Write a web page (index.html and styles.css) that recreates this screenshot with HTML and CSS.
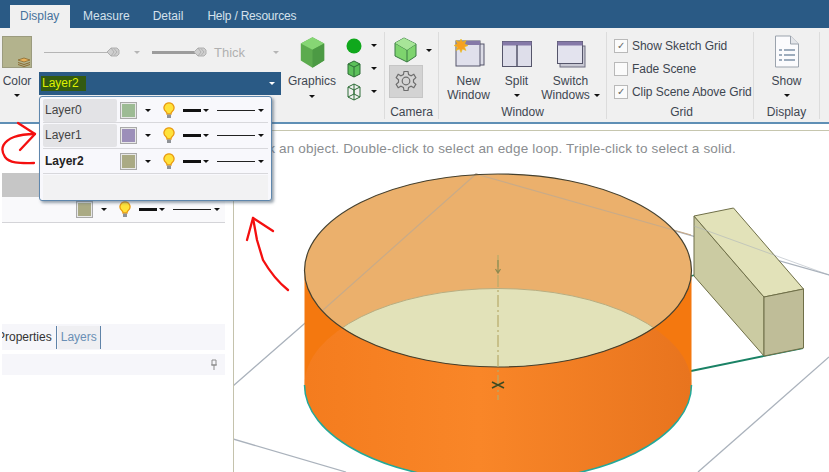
FILE: index.html
```html
<!DOCTYPE html>
<html lang="en">
<head>
<meta charset="utf-8">
<title>Display ribbon</title>
<link rel="stylesheet" href="styles.css">
</head>
<body>
<svg class="defs" width="0" height="0" aria-hidden="true">
  <defs>
    <symbol id="bulb" viewBox="0 0 12 17">
      <path d="M6 .8a5 5 0 0 0-3 9c.8.7 1 1.300 1 2.200h4c0-.9.2-1.500 1-2.200a5 5 0 0 0-3-9z" fill="#ffe23a" stroke="#e99a12" stroke-width="1.300"/>
      <rect x="4" y="12.500" width="4" height="3.500" fill="#8f9296"/>
    </symbol>
    <symbol id="nib" viewBox="0 0 14 10">
      <path d="M1 5l4-4h6l2 2v4l-2 2H5z" fill="#cfcfcf" stroke="#b0b0b0"/>
      <path d="M5 1l3 4-3 4M8 1.500l3 3.500-3 3.500" fill="none" stroke="#a8a8a8" stroke-width=".8"/>
    </symbol>
  </defs>
</svg>
<div class="tabbar">
  <div class="tab active">Display</div>
  <div class="tab">Measure</div>
  <div class="tab">Detail</div>
  <div class="tab">Help / Resources</div>
</div>
<div class="ribbon">
  <section class="group g-layer">
    <div class="color-btn">
      <div class="color-swatch">
        <svg width="14" height="10" viewBox="0 0 14 10"><path d="M1 3l6-2 6 2-6 2z" fill="#e9b15a" stroke="#8a6a30" stroke-width=".8"/><path d="M1 5.500l6 2 6-2M1 7.500l6 2 6-2" fill="none" stroke="#8a6a30"/></svg>
      </div>
      <div class="btn-text">Color</div>
      <i class="caret"></i>
    </div>
    <div class="layer-col">
      <div class="line-row">
        <div class="pencil thin"><svg width="14" height="10"><use href="#nib"/></svg></div>
        <i class="caret pale"></i>
        <div class="pencil thick"><svg width="14" height="10"><use href="#nib"/></svg></div>
        <span class="thick-text">Thick</span>
        <i class="caret pale"></i>
      </div>
      <div class="combo"><span class="combo-text">Layer2</span><i class="caret white"></i></div>
    </div>
  </section>

  <section class="group g-graphics">
    <div class="group-body">
      <div class="big-btn">
        <svg width="27" height="33" viewBox="0 0 30 36"><path d="M15 1l13 7v19l-13 8-13-8V8z" fill="#5cab4e"/><path d="M15 1l13 7-13 7-13-7z" fill="#86d674"/><path d="M15 15l13-7v19l-13 8z" fill="#4c9a44"/></svg>
        <div class="btn-text">Graphics</div>
        <i class="caret"></i>
      </div>
      <div class="mini-col">
        <div class="mini"><svg width="16" height="16" viewBox="0 0 16 16"><circle cx="8" cy="8" r="7.500" fill="#10a81c"/></svg><i class="caret"></i></div>
        <div class="mini"><svg width="16" height="18" viewBox="0 0 16 18"><path d="M8 1l6 3v10l-6 3-6-3V4z" fill="#5cc05a" stroke="#2d6d36"/><path d="M2 4l6 3 6-3M8 7v10" fill="none" stroke="#2d6d36"/></svg><i class="caret"></i></div>
        <div class="mini"><svg width="16" height="18" viewBox="0 0 16 18"><path d="M8 1l6 3v10l-6 3-6-3V4zM2 4l6 3 6-3M8 7v10M8 1v10M2 14l6-3 6 3" fill="none" stroke="#2d6d36"/></svg><i class="caret"></i></div>
      </div>
    </div>
  </section>

  <section class="group g-camera">
    <div class="camera-body">
      <div class="mini"><svg width="24" height="26" viewBox="0 0 24 26"><path d="M10 1l12 6v12l-9 6-12-6V6z" fill="#7ed46e" stroke="#3a7a44"/><path d="M1 6l12 7v12M13 13l9-6" fill="none" stroke="#3a7a44"/><path d="M1 6l9-5 12 6-9 6z" fill="#a7e598"/></svg><i class="caret"></i></div>
      <div class="gear-btn">
        <svg width="22" height="24" viewBox="0 0 22 24"><path d="M9 1.500h4l.6 3 2.500 1.200 2.700-1.500 2 3.500-2.300 2v2.600l2.300 2-2 3.500-2.700-1.500-2.500 1.200-.6 3H9l-.6-3-2.500-1.200-2.700 1.500-2-3.500 2.300-2V9.700l-2.300-2 2-3.500 2.700 1.500 2.500-1.200z" fill="none" stroke="#6d6d6d" stroke-width="1.200"/><circle cx="11" cy="11" r="3.800" fill="none" stroke="#6d6d6d" stroke-width="1.200"/></svg>
      </div>
    </div>
    <div class="group-label">Camera</div>
  </section>

  <section class="group g-window">
    <div class="group-body">
      <div class="win-btn w-new">
        <svg class="win-icon" width="32" height="30" viewBox="0 0 32 30"><rect x="11" y="5" width="20" height="21" fill="#dcdce6" stroke="#55556a"/><rect x="3" y="2" width="24" height="25" fill="#e0e0ec" stroke="#55556a"/><rect x="3" y="2" width="24" height="4" fill="#8579a8"/><path d="M8 0l1.500 3L13 1.500 11.500 5l3.500 1.500L11.500 8 13 11.500 9.500 10 8 13.500 6.500 10 3 11.500 4.500 8 1 6.500 4.500 5 3 1.500 6.500 3z" fill="#f7a020" stroke="#e8c020" stroke-width=".6"/></svg>
        <div class="btn-text">New<br>Window</div>
      </div>
      <div class="win-btn w-split">
        <svg class="win-icon" width="32" height="30" viewBox="0 0 32 30"><rect x="1.500" y="2.500" width="29" height="25" fill="#dedeea" stroke="#55556a"/><rect x="1.500" y="2.500" width="29" height="4" fill="#8579a8"/><path d="M16 6v21" stroke="#55556a" stroke-width="1.500"/></svg>
        <div class="btn-text">Split</div>
        <i class="caret"></i>
      </div>
      <div class="win-btn w-switch">
        <svg class="win-icon" width="32" height="30" viewBox="0 0 32 30"><rect x="5" y="7" width="25" height="21" fill="#c9c9d4" stroke="#6c6c80"/><rect x="2.500" y="2.500" width="25" height="22" fill="#e3e3ee" stroke="#55556a"/><rect x="2.500" y="2.500" width="25" height="4" fill="#8579a8"/></svg>
        <div class="btn-text">Switch<br>Windows<i class="caret inline"></i></div>
      </div>
    </div>
    <div class="group-label">Window</div>
  </section>

  <section class="group g-grid">
    <div class="checks">
      <label class="check"><span class="box on">✓</span>Show Sketch Grid</label>
      <label class="check"><span class="box"></span>Fade Scene</label>
      <label class="check"><span class="box on">✓</span>Clip Scene Above Grid</label>
    </div>
    <div class="group-label">Grid</div>
  </section>

  <section class="group g-display">
    <div class="group-body col">
      <svg width="26" height="33" viewBox="0 0 26 33"><path d="M1.500 1h15l8 8v23h-23z" fill="#fbfbfd" stroke="#9ba3ad"/><path d="M16.500 1v8h8" fill="#e4e6ea" stroke="#9ba3ad"/><path d="M5 15h3M10 15h11M5 20h3M10 20h11M5 25h3M10 25h11" stroke="#7f93a8" stroke-width="1.500"/></svg>
      <div class="btn-text show">Show</div>
      <i class="caret"></i>
    </div>
    <div class="group-label">Display</div>
  </section>
</div>

<div class="workspace">
  <aside class="panel">
    <div class="panel-head"></div>
    <div class="panel-row">
      <div class="controls">
        <span class="swatch s-olive"></span><i class="caret"></i>
        <svg class="bulb" width="12" height="17"><use href="#bulb"/></svg>
        <span class="weight"></span><i class="caret"></i>
        <span class="rule"></span><i class="caret"></i>
      </div>
    </div>
    <div class="panel-tabs">
      <span class="ptab">Properties</span>
      <span class="ptab current">Layers</span>
    </div>
    <div class="panel-pin">
      <svg width="8" height="11" viewBox="0 0 8 11"><path d="M2 1h4v5H2zM1 6h6M4 6v5" fill="none" stroke="#8c8c8c"/></svg>
    </div>
  </aside>
  <main class="viewport">
    <svg class="scene" width="596" height="342" viewBox="233 130 596 342">
      <defs>
        <linearGradient id="side" x1="0" x2="1" y1="0" y2="0">
          <stop offset="0" stop-color="#f47c1e"/>
          <stop offset=".45" stop-color="#f98628"/>
          <stop offset="1" stop-color="#e8741e"/>
        </linearGradient>
        <clipPath id="inner"><ellipse cx="498" cy="270.500" rx="193.500" ry="96.500"/></clipPath>
        <clipPath id="wall"><path d="M304.500 270.500A193.500 96.500 0 0 0 691.500 270.500V385A193.500 96.500 0 0 1 304.500 385z"/></clipPath>
      </defs>
      <g fill="none" stroke="#aab2bc" stroke-width="1.300">
        <path d="M233 386L476 174L829 275"/>
        <path d="M233 439L346 472"/>
        <path d="M829 357L698 472"/>
      </g>
      <path d="M691 371L803 348" stroke="#1a8265" stroke-width="1.800"/>
      <path d="M691 276l4-1" stroke="#1a8265" stroke-width="1.800"/>
      <g stroke="#6f6f48" stroke-width="1" stroke-linejoin="round">
        <path d="M694 216L764 297V356L694 276z" fill="#cbcba2"/>
        <path d="M694 216L733.500 208L803.500 289L764 297z" fill="#e2e2b9"/>
        <path d="M764 297L803.500 289V348L764 356z" fill="#bfbd98"/>
      </g>
      <path d="M694 226L829 275" stroke="#aab2bc" stroke-width="1" opacity=".55"/>
      <ellipse cx="498" cy="270.500" rx="193.500" ry="96.500" fill="#ebb06c"/>
      <ellipse cx="498" cy="385" rx="193.500" ry="96.500" fill="#e2e2b9" stroke="#b8ad80" clip-path="url(#inner)"/>
      <path d="M476 174L322 311M476 174L691 235" fill="none" stroke="#c9ab88" stroke-width="1.200"/>
      <path d="M304.500 270.500A193.500 96.500 0 0 0 691.500 270.500V385A193.500 96.500 0 0 1 304.500 385z" fill="#f4780f"/>
      <ellipse cx="498" cy="385" rx="193.500" ry="96.500" fill="url(#side)" clip-path="url(#wall)"/>
      <path d="M304.500 385A193.500 96.500 0 0 0 498 481.500A193.500 96.500 0 0 0 691.500 385" fill="none" stroke="#23a99a" stroke-width="1.500"/>
      <ellipse cx="498" cy="270.500" rx="193.500" ry="96.500" fill="none" stroke="#45402e" stroke-width="1.200"/>
      <path d="M498 255V400" stroke="#b7ab6a" stroke-dasharray="12 3 2 3" stroke-width="1.200"/>
      <path d="M498 260v12M495.500 269l2.500 4 2.500-4" fill="none" stroke="#8f8a50" stroke-width="1.200"/>
      <path d="M492 382l12 6M492 388l12-6" stroke="#3f4a22" stroke-width="1.600"/>
    </svg>
    <p class="hint">Click an object. Double-click to select an edge loop. Triple-click to select a solid.</p>
  </main>
</div>

<svg class="ink" width="829" height="472" viewBox="0 0 829 472" aria-hidden="true">
  <g fill="none" stroke="#f40f0f" stroke-width="2.300" stroke-linecap="round" stroke-linejoin="round">
    <path d="M34 163C22 163 10 164 5 157C-1 148 4 141 14 137C22 134 29 134 35 134"/>
    <path d="M18 123L35 134L20 150"/>
    <path d="M253 218L257 240L263 260C270 272 278 282 288 290"/>
    <path d="M273 231L253 218L247 240"/>
  </g>
</svg>

<div class="popup">
  <div class="layer-row">
    <div class="layer-name hl">Layer0</div>
    <div class="controls">
      <span class="swatch s-green"></span><i class="caret"></i>
      <svg class="bulb" width="12" height="17"><use href="#bulb"/></svg>
      <span class="weight"></span><i class="caret"></i>
      <span class="rule"></span><i class="caret"></i>
    </div>
  </div>
  <div class="layer-row">
    <div class="layer-name hl">Layer1</div>
    <div class="controls">
      <span class="swatch s-purple"></span><i class="caret"></i>
      <svg class="bulb" width="12" height="17"><use href="#bulb"/></svg>
      <span class="weight"></span><i class="caret"></i>
      <span class="rule"></span><i class="caret"></i>
    </div>
  </div>
  <div class="layer-row">
    <div class="layer-name bold">Layer2</div>
    <div class="controls">
      <span class="swatch s-olive"></span><i class="caret"></i>
      <svg class="bulb" width="12" height="17"><use href="#bulb"/></svg>
      <span class="weight"></span><i class="caret"></i>
      <span class="rule"></span><i class="caret"></i>
    </div>
  </div>
  <div class="popup-foot"></div>
</div>
</body>
</html>
```

FILE: styles.css
```css
* { box-sizing: border-box; }
html, body { margin: 0; height: 100%; }
body {
  width: 829px;
  height: 472px;
  overflow: hidden;
  position: relative;
  background: #fff;
  font-family: "Liberation Sans", Arial, sans-serif;
  font-size: 12px;
  color: #3e4650;
}
.defs { position: absolute; }

.caret {
  display: inline-block;
  width: 0;
  height: 0;
  border-left: 3px solid transparent;
  border-right: 3px solid transparent;
  border-top: 3px solid #111;
  flex: none;
}
.caret.pale { border-top-color: #b5b5b5; }
.caret.white { border-top-color: #fff; }
.caret.inline { margin-left: 4px; vertical-align: 2px; }

.tabbar {
  height: 28px;
  background: #2a5a85;
  display: flex;
  align-items: flex-end;
  padding-left: 10px;
}
.tab {
  height: 23px;
  line-height: 22px;
  color: #d5e1ec;
  padding: 0 11.500px;
}
.tab.active {
  width: 60px;
  padding: 0 10px;
  background: #f0f0f0;
  color: #47729c;
  margin-right: 1.500px;
}
.tab:last-child { letter-spacing: -.2px; margin-left: 1px; }

.ribbon {
  height: 96px;
  background: #f0f0f0;
  border-bottom: 2px solid #5f8fb5;
  padding-top: 4px;
  display: flex;
}
.group {
  display: flex;
  flex-direction: column;
  align-items: center;
  height: 87px;
  border-right: 1px solid #dcdcdc;
  padding-top: 3px;
}
.group-body { display: flex; }
.group-body.col { flex-direction: column; align-items: center; }
.group-label {
  margin-top: auto;
  height: 14px;
  line-height: 14px;
  text-align: center;
}
.btn-text { line-height: 14px; text-align: center; }

.g-layer {
  width: 285px;
  flex-direction: row;
  align-items: flex-start;
  border-right: 0;
  padding: 4px 0 0 2px;
}
.color-btn {
  width: 30px;
  margin-right: 7px;
  display: flex;
  flex-direction: column;
  align-items: center;
}
.color-swatch {
  width: 30px;
  height: 32px;
  background: #b3b38d;
  border: 1px solid #9b9b7e;
  display: flex;
  align-items: flex-end;
  justify-content: flex-end;
  margin-bottom: 6px;
}
.color-btn .caret { margin-top: 6px; }
.layer-col { width: 242px; }
.line-row {
  height: 36px;
  display: flex;
  align-items: center;
  padding: 0 0 0 5px;
  margin-top: -2px;
  margin-bottom: 2px;
}
.pencil {
  display: flex;
  align-items: center;
  justify-content: flex-end;
  flex: none;
}
.pencil.thin { width: 76px; background: linear-gradient(#b5b5b5, #b5b5b5) left center / 64px 1px no-repeat; }
.pencil.thick { width: 55px; margin-left: 12px; background: linear-gradient(#9c9c9c, #9c9c9c) left center / 43px 3px no-repeat; }
.line-row .caret { margin-left: 14px; }
.line-row .caret:last-child { margin-left: 28px; }
.thick-text { color: #b0b0b0; margin-left: 7px; font-size: 13px; }
.combo {
  height: 23px;
  background: #2a5a85;
  display: flex;
  align-items: center;
  justify-content: space-between;
  padding: 0 6px 0 2px;
}
.combo-text {
  background: #335a10;
  color: #dff000;
  height: 15px;
  line-height: 15px;
  padding: 0 7px 0 1px;
}

.g-graphics { width: 100px; padding-top: 4px; align-items: flex-start; }
.big-btn {
  width: 54px;
  display: flex;
  flex-direction: column;
  align-items: center;
}
.big-btn .btn-text { margin-top: 5px; }
.big-btn .caret { margin-top: 7px; }
.mini-col {
  display: flex;
  flex-direction: column;
  gap: 4px;
  margin-left: 7px;
}
.mini { display: flex; align-items: center; gap: 10px; height: 19px; }
.mini-col .mini { gap: 9px; }

.g-camera { width: 54px; padding: 5px 0 0 4px; align-items: flex-start; }
.g-camera .group-label { align-self: center; margin-right: 4px; }
.camera-body { display: flex; flex-direction: column; align-items: flex-start; gap: 2px; }
.camera-body .mini { height: 26px; margin-left: 5px; gap: 8px; }
.gear-btn {
  width: 34px;
  height: 33px;
  background: #d3d3d3;
  border: 1px solid #c6c6c6;
  display: flex;
  align-items: center;
  justify-content: center;
}

.g-window { width: 168px; padding-top: 7px; align-items: flex-start; }
.g-window .group-label { align-self: center; }
.win-btn {
  display: flex;
  flex-direction: column;
  align-items: center;
  flex: none;
}
.win-icon { margin-bottom: 5px; }
.w-new { width: 59px; }
.w-split { width: 37px; }
.w-split .caret { margin-top: 6px; }
.w-switch { width: 71px; }

.g-grid { width: 147px; align-items: flex-start; padding: 6px 0 0 7px; }
.checks { display: flex; flex-direction: column; gap: 7px; }
.check { display: flex; align-items: center; height: 16px; white-space: nowrap; letter-spacing: -.05px; }
.box {
  width: 14px;
  height: 14px;
  margin-right: 4px;
  background: #fbfbfb;
  border: 1px solid #b9b9b9;
  font-size: 10px;
  line-height: 12px;
  text-align: center;
  color: #666;
}
.g-grid .group-label { align-self: center; margin-right: 4px; }

.g-display { width: 66px; }
.btn-text.show { margin-top: 6px; }
.g-display .caret { margin-top: 6px; }

.workspace { height: 348px; display: flex; }
.panel {
  width: 233px;
  padding: 49px 8px 0 2px;
  display: flex;
  flex-direction: column;
}
.panel-head { height: 24px; background: #c6c6c6; }
.panel-row {
  height: 26px;
  background: #f9f9fb;
  border-bottom: 1px solid #d4d4d8;
  padding-left: 74px;
  display: flex;
  align-items: center;
}
.panel-tabs {
  margin-top: 101px;
  height: 26px;
  background: #f6f6fa;
  display: flex;
  align-items: center;
  overflow: hidden;
}
.ptab {
  height: 23px;
  line-height: 22px;
  padding-right: 4px;
  border-right: 1.500px solid #5f83a8;
  color: #333;
  margin-left: -5px;
}
.ptab + .ptab { margin-left: 1px; padding: 0 3px; }
.ptab.current { color: #6a8fb5; background: #efeff2; }
.panel-pin {
  margin-top: 4px;
  height: 21px;
  background: #f6f6fa;
  display: flex;
  align-items: center;
  justify-content: flex-end;
  padding-right: 7px;
}

.viewport {
  flex: 1;
  margin-top: 6px;
  border-top: 1px solid #c6c6ae;
  border-left: 1px solid #c4c2ac;
  position: relative;
  overflow: hidden;
  height: 342px;
}
.scene { display: block; margin-left: -1px; margin-top: -1px; }
.hint {
  position: absolute;
  left: 11px;
  top: 10px;
  margin: 0;
  font-size: 13.500px;
  color: #8a8d90;
  white-space: nowrap;
  letter-spacing: .17px;
}

.ink { position: absolute; left: 0; top: 0; pointer-events: none; }

.popup {
  position: absolute;
  left: 39px;
  top: 96px;
  width: 233px;
  height: 105px;
  background: #f8f8fc;
  border: 1px solid #5f87ad;
  border-radius: 3px;
  box-shadow: 2px 2px 3px rgba(70, 90, 110, .55);
  padding: 1px 3px 0 3px;
}
.layer-row {
  height: 25px;
  display: flex;
  align-items: center;
  border-bottom: 1px solid #d8d8dc;
}
.layer-row:nth-child(2) { height: 26px; }
.layer-name {
  width: 74px;
  height: 23px;
  line-height: 22px;
  padding-left: 2px;
  margin-right: 3px;
  color: #444;
}
.layer-name.hl { background: #e3e3e6; border-radius: 2px; }
.layer-name.bold { font-weight: 700; color: #222; }
.popup-foot { height: 25px; background: #f2f2f3; margin-top: 1px; }

.controls { display: flex; align-items: center; }
.swatch {
  width: 17px;
  height: 17px;
  border: 1px solid #a9a9a9;
  box-shadow: inset 0 0 0 1px #e8e8e8;
  margin-right: 8px;
}
.s-green { background: #9dbb94; }
.s-purple { background: #9c8fb9; }
.s-olive { background: #aaaa84; }
.bulb { margin-left: 12px; margin-right: 8px; }
.weight { width: 18px; height: 3px; background: #111; margin-right: 2px; }
.rule { width: 38px; height: 1px; background: #222; margin-left: 8px; margin-right: 3px; }
```
